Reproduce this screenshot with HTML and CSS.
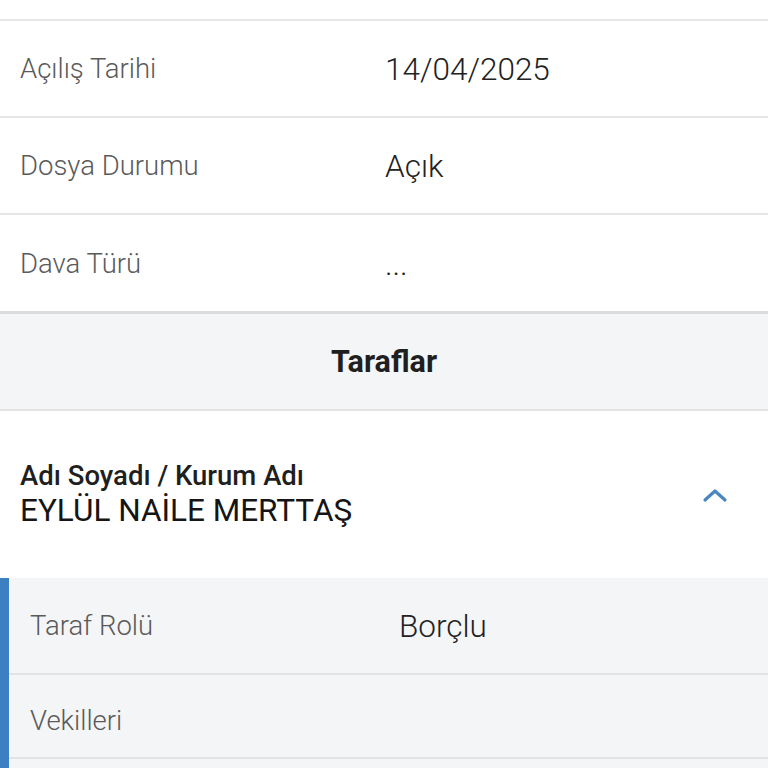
FILE: index.html
```html
<!DOCTYPE html>
<html lang="tr">
<head>
<meta charset="utf-8">
<link rel="stylesheet" href="styles.css">
</head>
<body>
<div class="page">
  <div class="top-gap"></div>
  <div class="info">
    <div class="row"><div class="label">Açılış Tarihi</div><div class="value">14/04/2025</div></div>
    <div class="row"><div class="label">Dosya Durumu</div><div class="value">Açık</div></div>
    <div class="row last"><div class="label">Dava Türü</div><div class="value">...</div></div>
  </div>
  <div class="section-head">Taraflar</div>
  <div class="party">
    <div class="party-text">
      <div class="party-label">Adı Soyadı / Kurum Adı</div>
      <div class="party-name">EYLÜL NAİLE MERTTAŞ</div>
    </div>
    <svg class="chevron" width="26" height="16" viewBox="0 0 26 16"><path d="M3 13 L13 4 L23 13" fill="none" stroke="#4a87c2" stroke-width="3.2" stroke-linecap="round" stroke-linejoin="round"/></svg>
  </div>
  <div class="details">
    <div class="drow tall"><div class="label">Taraf Rolü</div><div class="value">Borçlu</div></div>
    <div class="drow"><div class="label">Vekilleri</div><div class="value"></div></div>
    <div class="drow"></div>
  </div>
</div>
</body>
</html>
```
FILE: styles.css
```css
* { box-sizing: border-box; }
html, body { margin: 0; padding: 0; background: #fff; }
body { font-family: Roboto, "Noto Sans", sans-serif; width: 768px; height: 768px; overflow: hidden; }
.top-gap { height: 21px; border-bottom: 2px solid #e6e6e6; }
.row {
  display: flex; align-items: center; height: 97px;
  border-bottom: 2px solid #e6e6e6; padding-left: 20px;
}
.row.last { border-bottom: 3px solid #dcdcdc; height: 99px; }
.label { width: 365px; font-size: 27.5px; color: #5a5a5a; font-weight: 300; }
.value { font-size: 31.5px; color: #222; font-weight: 300; padding-top: 2px; }
.section-head {
  height: 97px; background: #f4f5f7; border-bottom: 2px solid #e2e2e2;
  display: flex; align-items: center; justify-content: center;
  font-size: 30.5px; font-weight: 700; color: #1f1f1f; padding-top: 0;
}
.party {
  height: 167px; display: flex; align-items: center; justify-content: space-between;
  padding: 0 40px 0 20px;
}
.party-text { padding-top: 0; }
.party-label { font-size: 27.5px; font-weight: 500; color: #1f1f1f; line-height: 32px; }
.party-name { font-size: 31.5px; font-weight: 400; color: #151515; line-height: 38px; }
.chevron { margin-top: 0; }
.details { background: #f4f5f7; border-left: 9px solid #3c80c1; }
.drow {
  display: flex; align-items: center; height: 96px;
  border-bottom: 2px solid #e3e3e3; padding-left: 21px;
}
.drow.tall { height: 97px; }
.drow:nth-child(2) { height: 84px; padding-top: 8px; }
.drow:nth-child(3) { height: 40px; border-bottom: none; }
.drow .label { width: 369px; }
```
